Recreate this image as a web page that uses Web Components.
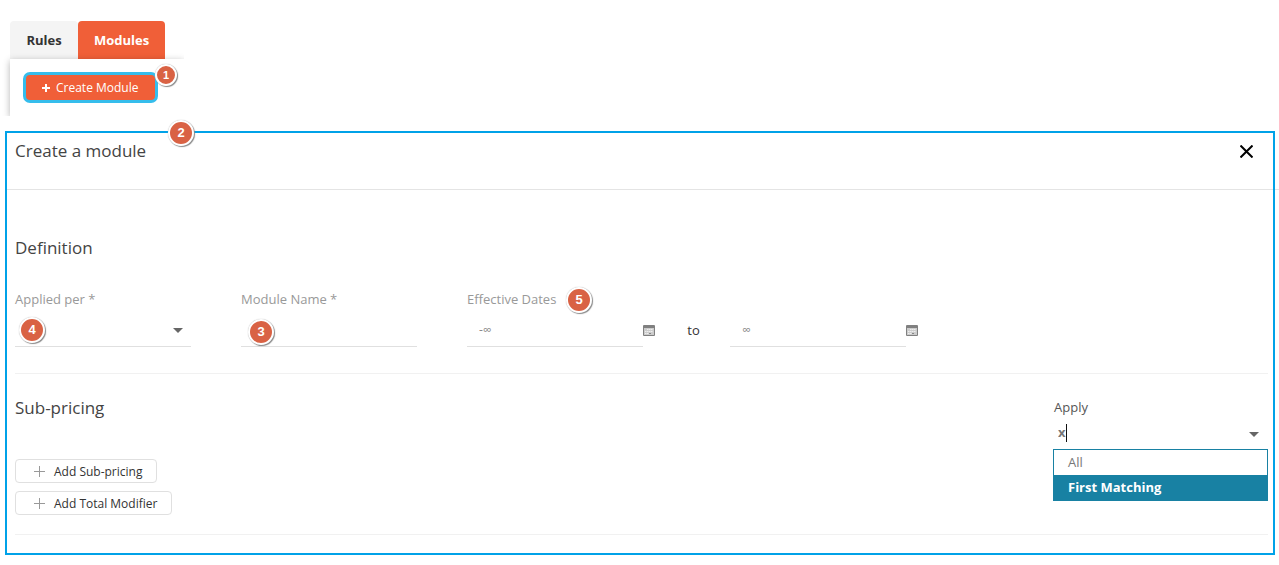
<!DOCTYPE html>
<html lang="en">
<head>
<meta charset="utf-8">
<title>Create a module</title>
<style>
body { margin: 0; background: #fff; color: #444; font: 13px/18px "Open Sans", sans-serif; }
</style>
</head>
<body>
<module-page></module-page>

<script>
const define = (name, html, setup) => customElements.define(name, class extends HTMLElement {
  constructor() {
    super();
    this.attachShadow({ mode: 'open' }).innerHTML = html;
  }
  connectedCallback() { if (setup) setup(this, this.shadowRoot); }
});

/* Round numbered callout */
define('step-badge', `
<style>
:host { position: absolute; box-sizing: border-box; width: 26px; height: 26px; border: 2px solid #fff; border-radius: 50%;
  background: #d96244; color: #fff; font: bold 13px/22px "Liberation Sans", sans-serif; text-align: center;
  box-shadow: 1px 1px 1px #888, 0 0 1px #aaa; z-index: 2; }
:host([small]) { width: 22px; height: 22px; font-size: 11px; line-height: 18px; }
</style><slot></slot>`);

define('module-tabs', `
<style>
:host { display: block; width: fit-content; padding: 21px 0 0 10px; overflow: hidden; }
nav { display: flex; }
button { border: 0; margin: 0; height: 38px; padding: 0 16px; border-radius: 4px 4px 0 0; background: #f4f4f4; color: #333;
  font: bold 13px/18px "Open Sans", sans-serif; }
button:first-child { min-width: 68px; }
button[aria-selected=true] { background: #f05f38; color: #fff; }
.panel { position: relative; padding: 13px 26px 13px 13px; background: #fff; box-shadow: 0 2px 7px rgba(0,0,0,.3); }
</style>
<nav role="tablist"><button role="tab" aria-selected="false">Rules</button><button role="tab" aria-selected="true">Modules</button></nav>
<div class="panel" role="tabpanel"><slot></slot></div>`);

define('create-button', `
<style>
:host { display: block; position: relative; width: fit-content; }
button { display: flex; align-items: center; gap: 6px; height: 31px; min-width: 135px; padding: 0 16px; border: 3px solid #35bdec; border-radius: 7px;
  background: #f05f38; color: #fff; font: 12px/18px "Open Sans", sans-serif; }
step-badge { left: 132px; top: -8px; }
</style>
<button type="button"><svg width="8" height="8" viewBox="0 0 8 8" aria-hidden="true"><path d="M4 0v8M0 4h8" stroke="#fff" stroke-width="2"/></svg>Create Module</button>
<step-badge small>1</step-badge>`);

define('add-button', `
<style>
:host { display: block; }
button { display: flex; align-items: center; gap: 8px; height: 24px; padding: 2px 14px 0 19px; border: 1px solid #e0e0e0; border-radius: 4px;
  background: #fff; color: #333; font: 12px/18px "Open Sans", sans-serif; }
svg { margin: -2px 1px 0 -1px; }
</style>
<button type="button"><svg width="11" height="11" viewBox="0 0 11 11" aria-hidden="true"><path d="M5.5 0v11M0 5.5h11" stroke="#999"/></svg><slot></slot></button>`);

const fieldStyle = `
:host { display: block; position: relative; width: 176px; }
label { display: block; color: #999; margin-bottom: 7px; }
input, select { display: block; box-sizing: border-box; width: 100%; height: 32px; margin: 0; padding: 0 12px; border: 0;
  border-bottom: 1px solid #e0e0e0; border-radius: 0; background: none; appearance: none; outline: 0; color: #555;
  font: 13px/18px "Open Sans", sans-serif; }
.arrow { position: absolute; right: 8px; bottom: 14px; pointer-events: none; }
::slotted(step-badge) { left: 4px; top: 27px; }`;
const arrow = `<svg class="arrow" width="10" height="5" viewBox="0 0 10 5" aria-hidden="true"><path d="M0 0h10L5 5z" fill="#666"/></svg>`;

define('select-field', `<style>${fieldStyle}</style>
<label for="f"></label><select id="f"><option></option></select>${arrow}<slot></slot>`,
  (el, root) => root.querySelector('label').textContent = el.getAttribute('label'));

define('text-field', `<style>${fieldStyle} ::slotted(step-badge) { left: 7px; top: 29px; }</style>
<label for="f"></label><input id="f" type="text"><slot></slot>`,
  (el, root) => root.querySelector('label').textContent = el.getAttribute('label'));

define('date-range', `
<style>
:host { display: block; position: relative; }
label { display: block; width: fit-content; color: #999; margin-bottom: 7px; }
.row { display: flex; align-items: center; height: 32px; }
input { box-sizing: border-box; width: 176px; height: 32px; padding: 0 12px 2px; margin: 0; border: 0; border-bottom: 1px solid #e0e0e0;
  background: none; outline: 0; font: 12px/18px "Open Sans", sans-serif; }
input::placeholder { color: #888; opacity: 1; }
button { display: flex; padding: 0 0 2px; border: 0; background: none; }
.to { box-sizing: border-box; width: 75px; padding: 0 0 2px 2px; text-align: center; color: #333; }
::slotted(step-badge) { left: 99px; top: -3px; }
</style>
<label for="from">Effective Dates</label>
<div class="row"><input id="from" type="text" placeholder="-∞"><button type="button" aria-label="Pick start date"></button>
<span class="to">to</span><input type="text" aria-label="End date" placeholder="∞"><button type="button" aria-label="Pick end date"></button></div>
<slot></slot>`, (el, root) => root.querySelectorAll('button').forEach(b => b.innerHTML =
`<svg width="12" height="11" viewBox="0 0 12 11"><path d="M0 1q0-1 1-1h10q1 0 1 1v9q0 1-1 1H1q-1 0-1-1z" fill="#808080"/><path d="M1 3h10v7H1z" fill="#ccc"/><path d="M4 4.5h6M2 6.500h8M2 8.500h4" stroke="#eee" stroke-dasharray="1.500 .5"/><path d="M6 8h2v1H6z" fill="#888"/></svg>`));

define('apply-combo', `
<style>
:host { display: block; position: relative; width: 215px; }
label { display: block; width: fit-content; padding-left: 1px; color: #555; }
.control { display: flex; align-items: center; position: relative; height: 33px; }
input { box-sizing: border-box; width: 100%; height: 33px; border: 0; padding: 0 5px 2px; margin: 0; background: none; outline: 0; color: #777;
  font: bold 13px/18px "Open Sans", sans-serif; }
.caret { position: absolute; left: 13px; top: 8px; width: 1px; height: 18px; background: #111; }
.arrow { position: absolute; right: 9px; top: 16px; pointer-events: none; }
ul { position: absolute; top: 100%; left: 0; right: 0; box-sizing: border-box; margin: 0; padding: 0; list-style: none;
  border: 1px solid #1881a3; background: #fff; }
li { padding: 0 14px; line-height: 25px; color: #777; }
li[aria-selected=true] { background: #1881a3; color: #fff; font-weight: bold; }
</style>
<label for="apply">Apply</label>
<div class="control"><input id="apply" type="text" role="combobox" aria-expanded="true" aria-controls="options" value="x"><span class="caret"></span>${arrow}</div>
<ul id="options" role="listbox"><li role="option" aria-selected="false">All</li><li role="option" aria-selected="true">First Matching</li></ul>`);

define('form-section', `
<style>
:host { display: flex; justify-content: space-between; align-items: flex-start; margin: 0 7px 0 10px; border-bottom: 1px solid #f1f1f1; }
h2 { margin: 0; color: #444; font: 17px/24px "Open Sans", sans-serif; }
</style>
<div><h2></h2><slot></slot></div><slot name="aside"></slot>`,
  (el, root) => root.querySelector('h2').textContent = el.getAttribute('heading'));

define('module-dialog', `
<style>
:host { display: block; position: relative; margin: 15px 4px 10px 5px; padding-bottom: 20px; outline: 2px solid #00a2e8; outline-offset: -2px; }
header { display: flex; align-items: flex-start; justify-content: space-between; margin-right: -4px; padding: 8px 26px 26px 10px;
  border-bottom: 1px solid #e4e4e4; }
h1 { margin: 0; color: #444; font: 17px/24px "Open Sans", sans-serif; }
header button { display: flex; margin: 6px 0 0; padding: 0; border: 0; background: none; }
.definition { padding: 46px 0 26px; }
.pricing { padding: 22px 0 19px; }
.fields { display: flex; gap: 50px; margin-top: 30px; }
.actions { display: flex; flex-direction: column; align-items: flex-start; gap: 8px; margin-top: 39px; }
apply-combo { margin-top: 2px; }
.callout { left: 163px; top: -11px; }
</style>
<header><h1>Create a module</h1><button type="button" aria-label="Close"><svg width="13" height="13" viewBox="0 0 13 13"><path d="M.5.5l12 12M12.500.5l-12 12" stroke="#000" stroke-width="2"/></svg></button></header>
<form-section class="definition" heading="Definition"><div class="fields">
<select-field label="Applied per *"><step-badge>4</step-badge></select-field>
<text-field label="Module Name *"><step-badge>3</step-badge></text-field>
<date-range><step-badge>5</step-badge></date-range></div></form-section>
<form-section class="pricing" heading="Sub-pricing"><div class="actions"><add-button>Add Sub-pricing</add-button><add-button>Add Total Modifier</add-button></div>
<apply-combo slot="aside"></apply-combo></form-section>
<step-badge class="callout">2</step-badge>`);

define('module-page', `
<style>:host { display: block; }</style>
<module-tabs><create-button></create-button></module-tabs>
<module-dialog></module-dialog>`);
</script>
</body>
</html>
